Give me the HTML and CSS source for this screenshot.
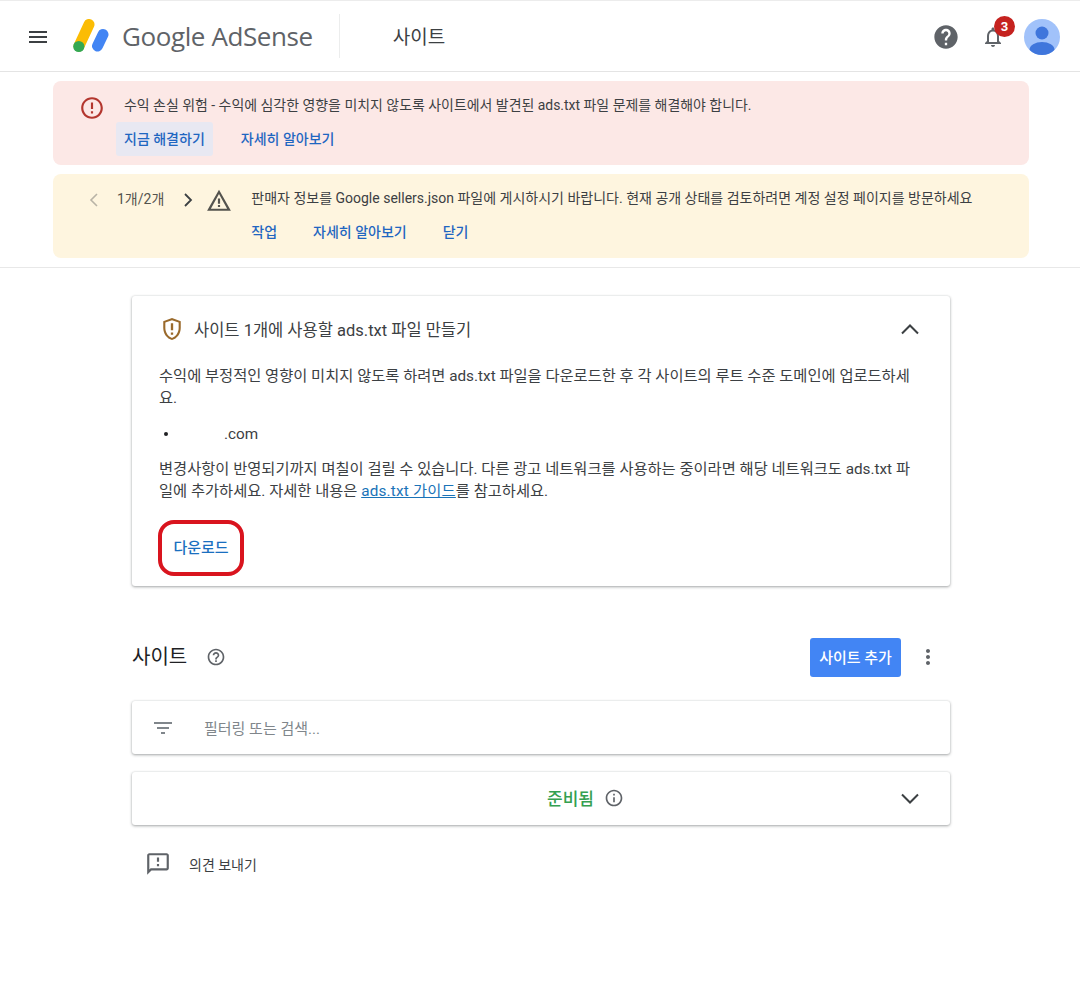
FILE: index.html
```html
<!DOCTYPE html>
<html lang="ko">
<head>
<meta charset="utf-8">
<title>사이트</title>
<link rel="stylesheet" href="styles.css">
</head>
<body>
<header class="topbar">
  <svg class="menu" width="24" height="24" viewBox="0 0 24 24"><path d="M3 18h18v-2H3v2zm0-5h18v-2H3v2zm0-7v2h18V6H3z" fill="#3c4043"/></svg>
  <svg class="logo" width="36" height="34" viewBox="0 0 36 34">
    <path d="M6 27 L16 5.5" stroke="#fbbc04" stroke-width="11" stroke-linecap="round"/>
    <circle cx="5.8" cy="27.5" r="5.6" fill="#34a853"/>
    <path d="M24.5 27 L30 15.5" stroke="#4285f4" stroke-width="11" stroke-linecap="round"/>
  </svg>
  <span class="brand">Google AdSense</span>
  <span class="divider"></span>
  <span class="page-title">사이트</span>
  <span class="spacer"></span>
  <svg class="help" width="28" height="28" viewBox="0 0 24 24"><path d="M12 2C6.48 2 2 6.48 2 12s4.48 10 10 10 10-4.48 10-10S17.52 2 12 2zm1 17h-2v-2h2v2zm2.07-7.75l-.9.92C13.45 12.9 13 13.5 13 15h-2v-.5c0-1.1.45-2.1 1.17-2.83l1.24-1.26c.37-.36.59-.86.59-1.41 0-1.1-.9-2-2-2s-2 .9-2 2H8c0-2.21 1.79-4 4-4s4 1.79 4 4c0 .88-.36 1.68-.93 2.25z" fill="#5f6368"/></svg>
  <span class="bell-wrap">
    <svg width="24" height="24" viewBox="0 0 24 24"><path d="M12 22c1.1 0 2-.9 2-2h-4c0 1.1.9 2 2 2zm6-6v-5c0-3.07-1.63-5.64-4.5-6.32V4c0-.83-.67-1.5-1.5-1.5s-1.5.67-1.5 1.5v.68C7.64 5.36 6 7.92 6 11v5l-2 2v1h16v-1l-2-2zm-2 1H8v-6c0-2.48 1.51-4.5 4-4.5s4 2.02 4 4.5v6z" fill="#5f6368"/></svg>
    <span class="badge">3</span>
  </span>
  <svg class="avatar" width="36" height="36" viewBox="0 0 36 36">
    <defs><clipPath id="av"><circle cx="18" cy="18" r="18"/></clipPath></defs>
    <circle cx="18" cy="18" r="18" fill="#a1c2fa"/>
    <g clip-path="url(#av)" fill="#3f76dc"><circle cx="18" cy="14" r="6.5"/><ellipse cx="18" cy="31" rx="12.5" ry="8"/></g>
  </svg>
</header>

<section class="banners">
  <div class="banner banner-error">
    <svg class="err-icon" width="26" height="26" viewBox="0 0 24 24"><path d="M11 15h2v2h-2zm0-8h2v6h-2zm.99-5C6.47 2 2 6.48 2 12s4.47 10 9.99 10C17.52 22 22 17.52 22 12S17.52 2 11.99 2zM12 20c-4.42 0-8-3.58-8-8s3.58-8 8-8 8 3.58 8 8-3.58 8-8 8z" fill="#b3362e"/></svg>
    <div class="banner-body">
      <p class="banner-text">수익 손실 위험 - 수익에 심각한 영향을 미치지 않도록 사이트에서 발견된 ads.txt 파일 문제를 해결해야 합니다.</p>
      <div class="actions">
        <a class="action action-focus">지금 해결하기</a>
        <a class="action">자세히 알아보기</a>
      </div>
    </div>
  </div>
  <div class="banner banner-warn">
    <svg class="pager-prev" width="10" height="16" viewBox="0 0 10 16"><path d="M8 2 L2 8 L8 14" fill="none" stroke="#b8b3a6" stroke-width="1.6"/></svg>
    <span class="pager-text">1개/2개</span>
    <svg class="pager-next" width="10" height="16" viewBox="0 0 10 16"><path d="M2 2 L8 8 L2 14" fill="none" stroke="#3c4043" stroke-width="1.8"/></svg>
    <svg class="warn-icon" width="26" height="24" viewBox="0 0 24 22"><path d="M12 5.5 19.5 19h-15L12 5.5zM12 1.5 1 21h22L12 1.5zm1 14h-2v2h2v-2zm0-6h-2v5h2v-5z" fill="#54534e"/></svg>
    <div class="banner-body">
      <p class="banner-text banner-text-warn">판매자 정보를 Google sellers.json 파일에 게시하시기 바랍니다. 현재 공개 상태를 검토하려면 계정 설정 페이지를 방문하세요</p>
      <div class="actions">
        <a class="action">작업</a>
        <a class="action">자세히 알아보기</a>
        <a class="action">닫기</a>
      </div>
    </div>
  </div>
</section>

<main class="content">
  <article class="card notice">
    <div class="notice-head">
      <svg class="shield" width="28" height="28" viewBox="0 0 24 24"><path d="M12 2.5 4.5 5.3v5.9c0 4.8 3.2 9.2 7.5 10.3 4.3-1.1 7.5-5.5 7.5-10.3V5.3L12 2.5zm5.7 8.7c0 3.9-2.5 7.5-5.7 8.5-3.2-1-5.7-4.6-5.7-8.5V6.5L12 4.4l5.7 2.1v4.7zM11 15h2v2h-2zm0-8h2v6h-2z" fill="#9a6a2c"/></svg>
      <h2 class="notice-title">사이트 1개에 사용할 ads.txt 파일 만들기</h2>
      <svg class="chev" width="24" height="24" viewBox="0 0 24 24"><path d="M4 16.5 12 8.5 20 16.5" fill="none" stroke="#3c4043" stroke-width="2"/></svg>
    </div>
    <p class="para para-first">수익에 부정적인 영향이 미치지 않도록 하려면 ads.txt 파일을 다운로드한 후 각 사이트의 루트 수준 도메인에 업로드하세요.</p>
    <ul class="domains"><li>.com</li></ul>
    <p class="para">변경사항이 반영되기까지 며칠이 걸릴 수 있습니다. 다른 광고 네트워크를 사용하는 중이라면 해당 네트워크도 ads.txt 파일에 추가하세요. 자세한 내용은 <a class="link">ads.txt 가이드</a>를 참고하세요.</p>
    <div class="download-wrap"><a class="download">다운로드</a></div>
  </article>

  <div class="sites-head">
    <h1 class="sites-title">사이트</h1>
    <svg class="q" width="20" height="20" viewBox="0 0 24 24"><path d="M11 18h2v-2h-2v2zm1-16C6.48 2 2 6.48 2 12s4.48 10 10 10 10-4.48 10-10S17.52 2 12 2zm0 18c-4.41 0-8-3.59-8-8s3.59-8 8-8 8 3.59 8 8-3.59 8-8 8zm0-14c-2.21 0-4 1.79-4 4h2c0-1.1.9-2 2-2s2 .9 2 2c0 2-3 1.75-3 5h2c0-2.25 3-2.5 3-5 0-2.21-1.79-4-4-4z" fill="#5f6368"/></svg>
    <span class="spacer"></span>
    <button class="add-btn">사이트 추가</button>
    <svg class="more" width="24" height="24" viewBox="0 0 24 24"><path d="M12 8c1.1 0 2-.9 2-2s-.9-2-2-2-2 .9-2 2 .9 2 2 2zm0 2c-1.1 0-2 .9-2 2s.9 2 2 2 2-.9 2-2-.9-2-2-2zm0 6c-1.1 0-2 .9-2 2s.9 2 2 2 2-.9 2-2-.9-2-2-2z" fill="#5f6368"/></svg>
  </div>

  <div class="card filter">
    <svg width="24" height="24" viewBox="0 0 24 24"><path d="M10 18h4v-2h-4v2zM3 6v2h18V6H3zm3 7h12v-2H6v2z" fill="#80868b"/></svg>
    <span class="placeholder">필터링 또는 검색...</span>
  </div>

  <div class="card ready">
    <span class="ready-label">준비됨</span>
    <svg class="info" width="20" height="20" viewBox="0 0 24 24"><path d="M11 7h2v2h-2zm0 4h2v6h-2zm1-9C6.48 2 2 6.48 2 12s4.48 10 10 10 10-4.48 10-10S17.52 2 12 2zm0 18c-4.41 0-8-3.59-8-8s3.59-8 8-8 8 3.59 8 8-3.59 8-8 8z" fill="#5f6368"/></svg>
    <svg class="ready-chev" width="24" height="24" viewBox="0 0 24 24"><path d="M4 8.5 12 16.5 20 8.5" fill="none" stroke="#3c4043" stroke-width="2"/></svg>
  </div>

  <div class="feedback">
    <svg width="26" height="26" viewBox="0 0 24 24"><path d="M20 2H4c-1.1 0-2 .9-2 2v18l4-4h14c1.1 0 2-.9 2-2V4c0-1.1-.9-2-2-2zm0 14H5.17L4 17.17V4h16v12zM11 12h2v2h-2zm0-6h2v4h-2z" fill="#5f6368"/></svg>
    <span>의견 보내기</span>
  </div>
</main>
</body>
</html>
```

FILE: styles.css
```css
* { box-sizing: border-box; }
html, body { margin: 0; padding: 0; background: #fff; }
body {
  font-family: Roboto, "Noto Sans CJK KR", sans-serif;
  color: #3c4043;
  font-size: 14px;
  width: 1080px;
  height: 990px;
  overflow: hidden;
}
a { text-decoration: none; }
p, h1, h2, ul { margin: 0; padding: 0; font-weight: 400; }
.spacer { flex: 1; }

.topbar {
  height: 72px;
  display: flex;
  align-items: center;
  border-top: 1px solid #ececec;
  border-bottom: 1px solid #e4e4e4;
  padding: 2px 20px 0 26px;
}
.logo { margin-left: 23px; margin-top: -3px; }
.brand {
  margin-left: 13px;
  margin-top: -2px;
  font-size: 26px;
  font-family: "Open Sans", Roboto, sans-serif;
  color: #5f6368;
  letter-spacing: -0.4px;
  white-space: nowrap;
}
.divider { width: 1px; height: 44px; background: #eceded; margin-left: 26px; margin-top: -2px; }
.page-title { margin-left: 53px; font-size: 19px; color: #3c4043; margin-top: -4px; }
.help { margin-right: 21px; }
.bell-wrap { position: relative; width: 24px; height: 24px; margin-right: 19px; }
.badge {
  position: absolute;
  top: -9px;
  left: 13px;
  width: 21px;
  height: 21px;
  border-radius: 50%;
  background: #c5221f;
  color: #fff;
  font-size: 13px;
  font-weight: 700;
  text-align: center;
  line-height: 21px;
}

.banners {
  padding: 9px 51px 9px 53px;
  border-bottom: 1px solid #e8e8e8;
  display: flex;
  flex-direction: column;
  gap: 9px;
}
.banner {
  height: 84px;
  border-radius: 8px;
  display: flex;
  align-items: flex-start;
  padding-top: 14px;
}
.banner-error { background: #fce8e6; padding-left: 26px; }
.banner-warn { background: #fef5df; padding-left: 36px; }
.err-icon { flex: none; margin-right: 19px; }
.banner-text { font-size: 13.94px; line-height: 20px; color: #3c4043; white-space: nowrap; }
.banner-text-warn { font-size: 14px; }
.actions { display: flex; gap: 36px; margin-top: 7px; }
.action {
  color: #1f66c1;
  font-size: 14px;
  font-weight: 500;
  line-height: 34px;
  white-space: nowrap;
}
.action-focus { background: #e8e8f2; border-radius: 3px; margin: 0 -8px; padding: 0 8px; }
.pager-prev { flex: none; margin-top: 4px; }
.pager-text { margin-left: 18px; margin-right: 19px; line-height: 22px; font-size: 14px; color: #54534e; }
.pager-next { flex: none; margin-top: 4px; }
.warn-icon { flex: none; margin-left: 13px; margin-right: 19px; }

.content {
  width: 818px;
  margin-left: 132px;
  padding-top: 28px;
}
.card {
  background: #fff;
  border-radius: 3px;
  box-shadow: 0 1px 3px rgba(60, 64, 67, .45), 0 0 2px rgba(60, 64, 67, .12);
}
.notice { height: 290px; padding: 21px 27px 0; }
.notice-head { display: flex; align-items: center; height: 24px; }
.shield { margin-right: 8px; margin-left: -1px; }
.notice-title { font-size: 16.5px; color: #3c4043; flex: 1; }
.chev { margin-right: 1px; }
.para { font-size: 15.3px; line-height: 22px; color: #3c4043; word-break: break-all; }
.para-first { margin-top: 24px; }
.domains { list-style: none; margin: 14px 0 13px; line-height: 22px; font-size: 15.3px; }
.domains li { padding-left: 65px; position: relative; }
.domains li::before {
  content: "";
  position: absolute;
  left: 5px;
  top: 9px;
  width: 4px;
  height: 4px;
  border-radius: 50%;
  background: #202124;
}
.link { color: #1a73b8; text-decoration: underline; letter-spacing: .2px; }
.download-wrap { margin-top: 18px; margin-left: -1px; }
.download {
  display: inline-block;
  width: 86px;
  height: 56px;
  border: 4px solid #d9141e;
  border-radius: 16px;
  color: #1a6fc0;
  font-size: 15px;
  font-weight: 500;
  text-align: center;
  line-height: 49px;
}

.sites-head { display: flex; align-items: center; margin-top: 51px; height: 40px; }
.sites-title { font-size: 20px; color: #202124; margin-top: -3px; }
.q { margin-left: 19px; }
.add-btn {
  width: 91px;
  height: 39px;
  border: 0;
  border-radius: 3px;
  background: #4285f4;
  color: #fff;
  font: 500 15px Roboto, "Noto Sans CJK KR", sans-serif;
  padding: 0 0 2px;
}
.more { margin-left: 15px; margin-right: 10px; }

.filter { display: flex; align-items: center; height: 53px; margin-top: 24px; padding-left: 19px; }
.placeholder { margin-left: 29px; font-size: 15px; color: #80868b; }
.ready { display: flex; align-items: center; height: 53px; margin-top: 18px; position: relative; padding-left: 415px; }
.ready-label { font-size: 17px; font-weight: 500; color: #34a050; margin-top: -3px; }
.info { margin-left: 10px; margin-top: -2px; }
.ready-chev { position: absolute; right: 28px; top: 14px; }
.feedback { display: flex; align-items: center; margin-top: 26px; margin-left: 13px; font-size: 14px; color: #3c4043; }
.feedback span { margin-left: 18px; }
```
